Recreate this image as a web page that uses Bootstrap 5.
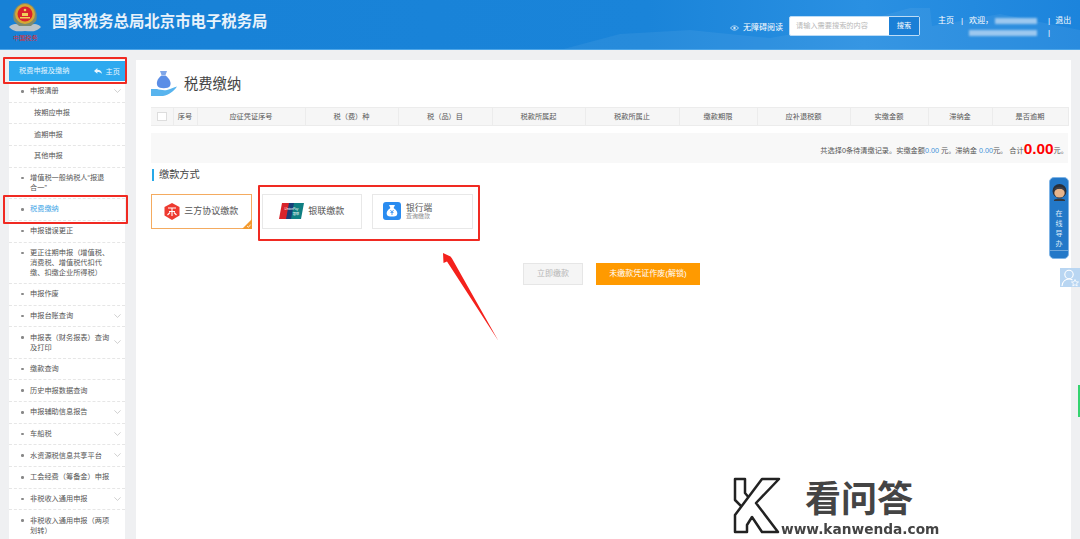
<!DOCTYPE html>
<html lang="zh-CN">
<head>
  <meta charset="UTF-8">
  <title>税费缴纳</title>
  <link href="https://cdn.jsdelivr.net/npm/bootstrap@5.3.0/dist/css/bootstrap.min.css" rel="stylesheet">
  <style>
    html, body { height: 100%; }
    body {
      width: 1080px; height: 539px; overflow: hidden; position: relative;
      background: #eff0f2; color: #555;
      font-family: "Liberation Sans", "Noto Sans CJK SC", sans-serif; font-size: 7.2px;
    }
    .top-bar {
      height: 50px; color: #fff; position: relative; overflow: hidden;
      background: linear-gradient(90deg, #1781d6 0%, #1a84d9 60%, #2a90e2 80%, #1c84dc 100%);
      border-bottom: 1px solid #4ea6e8;
    }
    .top-hills { position: absolute; left: 560px; top: 0; }
    .emblem { position: absolute; left: 8px; top: 1px; }
    .emblem-note { position: absolute; left: 13px; top: 34px; color: #d5303a; font-size: 6.2px; line-height: 8px; }
    .site-title { position: absolute; left: 52px; top: 12px; font-size: 15.4px; line-height: 20px; font-weight: 700; color: #e8f2fb; }
    .top-tools { position: absolute; left: 730px; top: 15px; width: 350px; }
    .read-link { width: 59px; font-size: 8px; line-height: 22px; margin-top: 1px; }
    .search-box { width: 131px; height: 20px; border: 1px solid #bcdcf6; border-radius: 2px; background: #fff; margin-top: 1px; }
    .search-hint { width: 99px; padding-left: 6px; color: #b8b8b8; line-height: 18px; }
    .search-btn { flex: 1; background: #1a7fd6; color: #fff; text-align: center; line-height: 18px; }
    .top-links { margin: 0 0 0 18px; font-size: 8px; line-height: 12px; width: 134px; }
    .top-sep { margin-left: 7px; }
    .top-hello { margin-left: 6px; width: 26px; }
    .top-name { width: 42px; }
    .blur-name { display: block; background: #9cc8ef; filter: blur(1px); height: 6px; margin-top: 3px; }
    .blur-one { width: 42px; }
    .blur-two { width: 68px; margin: 6px 0 0 -26px; }
    .top-sep2 { margin-left: 11px; }
    .top-out { margin-left: 5px; }
    .page-row { height: 489px; padding: 10px 0 0 9px; gap: 11px; }

    .side-menu { width: 116px; background: #fff; flex: none; padding-top: 1px; }
    .side-head { background: #2ea9ef; color: #e9f6fe; height: 20px; padding: 0 5px 0 10px; line-height: 19px; }
    .side-item {
      border: 0; border-bottom: 1px dashed #e6e6e6; border-radius: 0 !important; background: transparent;
      min-height: 21.7px; padding: 5.3px 14px 5.1px 21px; line-height: 10px; font-size: 7.2px; color: #555; position: relative;
    }
    .side-item::before { content: ""; position: absolute; left: 12px; top: 9px; width: 2.5px; height: 2.5px; border-radius: 50%; background: #888; }
    .side-sub { padding-left: 25px; }
    .side-sub::before { display: none; }
    .side-on { color: #3aa3e6; }
    .side-arrow { position: absolute; right: 4px; top: 8px; }
    .side-tall .side-arrow { top: 13px; }

    .main-panel { width: 935px; background: #fff; flex: none; padding: 10px 3px 0 15px; }
    .page-title { height: 37px; gap: 6px; font-size: 14.3px; color: #444; line-height: 28px; margin-left: -1px; }
    .pay-table { width: 917px; table-layout: fixed; margin: 0; }
    .pay-table th {
      background: #f6f6f6; height: 18px; padding: 0; border: 1px solid #ececec; border-width: 1px 1px 1px 0;
      text-align: center; font-weight: 400; font-size: 7.2px; line-height: 16px; color: #555;
    }
    .pay-check { display: inline-block; width: 10px; height: 9px; background: #fff; border: 1px solid #ddd; vertical-align: middle; margin-top: -1px; }
    .sum-strip { width: 917px; height: 30px; background: #f8f8f8; margin-top: 7px; padding: 9px 0 0 0; text-align: right; line-height: 16px; }
    .sum-blue { color: #3f93d8; }
    .sum-big { color: #f00; font-weight: 700; font-size: 15.4px; line-height: 14px; vertical-align: -1px; }
    .way-title { border-left: 2px solid #27a9e8; margin: 6px 0 0 1px; padding-left: 5px; height: 12px; line-height: 12px; font-size: 10.2px; color: #444; }
    .way-row { margin-top: 12.500px; gap: 10px; }
    .way-card { width: 100.500px; height: 35.500px; border: 1px solid #e8e8e8; gap: 4px; font-size: 9px; color: #555; position: relative; background: #fff; }
    .way-on { border-color: #f4ab60; }
    .way-bank { justify-content: flex-start !important; padding-left: 10px; gap: 5px; }
    .way-corner { position: absolute; right: -1px; bottom: -1px; }
    .way-lines { line-height: 10px; font-size: 8.7px; }
    .way-lines small { display: block; font-size: 6px; line-height: 7px; color: #888; }
    .act-row { margin: 33.500px 0 0 372px; gap: 13px; }
    .act-gray, .act-orange { height: 22px; padding: 0; font-size: 8px; line-height: 20px; border-radius: 0; }
    .act-gray { width: 60px; background: #f5f5f5; border: 1px solid #e6e6e6; color: #b5b5b5; }
    .act-orange { width: 104px; background: #ff9a00; border: 1px solid #ff9a00; color: #fff; }

    .red-box { position: absolute; border: 2px solid #f02a22; border-radius: 1px; }
    .red-a { left: 3px; top: 57px; width: 124px; height: 27px; }
    .red-b { left: 3px; top: 195px; width: 125px; height: 29px; }
    .red-c { left: 258px; top: 185px; width: 222px; height: 56px; }
    .red-arrow { position: absolute; left: 435px; top: 245px; }
    .help-tab { position: absolute; left: 1049px; top: 177px; width: 20px; height: 82px; border-radius: 5px; background: #2378c8; color: #dbeaf8; text-align: center; padding-top: 5px; font-size: 7px; line-height: 10px; border: 1px solid #7fb4e6; }
    .help-tab svg { display: block; margin: 0 auto; }
    .help-tab span { display: block; margin-top: 8px; padding-bottom: 1px; border-bottom: 1px solid rgba(255,255,255,.35); }
    .user-tab { position: absolute; left: 1060px; top: 268px; width: 20px; height: 19px; background: #b9d6f2; }
    .green-tab { position: absolute; left: 1078px; top: 385px; width: 2px; height: 32px; background: #35d36f; }
    .mark-logo { position: absolute; left: 732px; top: 475px; }
    .mark-name { position: absolute; left: 805px; top: 480px; font-size: 36px; line-height: 40px; font-weight: 700; color: #444; }
    .mark-url { position: absolute; left: 781px; top: 521px; font-size: 14px; line-height: 16px; font-weight: 700; color: #444; font-family: "DejaVu Sans", sans-serif; transform-origin: left center; transform: scaleX(.98); }
  </style>
</head>
<body>

<header class="top-bar">
  <svg class="top-hills" width="520" height="50" viewBox="0 0 520 50"><path d="M0 50 L60 34 L130 30 L210 38 L300 22 L350 8 L370 8 L372 26 L440 14 L520 30 V50 Z" fill="#fff" opacity=".06"/></svg>
  <svg class="emblem" width="34" height="34" viewBox="0 0 34 34">
    <path d="M1 26 C7 20 11 25 17 25 C23 25 27 20 33 26 C27 32 22 30 17 30 C12 30 7 32 1 26Z" fill="#b9c3c9"/>
    <path d="M6 20 C3 10 10 2 17 2 C24 2 31 10 28 20 L23 25 H11Z" fill="#7d8a70"/>
    <circle cx="17" cy="13" r="10" fill="#d7a733"/>
    <circle cx="17" cy="13" r="7.500" fill="#d9232e"/>
    <path d="M12 16 h10 v1.500 h-10z M14 12 h6 v3 h-6z" fill="#f1cf5a"/>
    <circle cx="17" cy="9" r="1.300" fill="#f1cf5a"/>
  </svg>
  <div class="emblem-note">中国税务</div>
  <div class="site-title">国家税务总局北京市电子税务局</div>
  <div class="top-tools d-flex">
    <div class="read-link d-flex align-items-center gap-1">
      <svg width="9" height="6" viewBox="0 0 9 6"><path d="M.5 3 C2.5 .2 6.5 .2 8.5 3 C6.5 5.8 2.5 5.8 .5 3Z" fill="none" stroke="#d5e9f9" stroke-width=".8"/><circle cx="4.500" cy="3" r="1.200" fill="#d5e9f9"/></svg>
      <span class="text-nowrap">无障碍阅读</span>
    </div>
    <div class="search-box d-flex">
      <div class="search-hint text-nowrap">请输入需要搜索的内容</div>
      <div class="search-btn">搜索</div>
    </div>
    <div class="top-links d-flex text-nowrap">
      <span>主页</span>
      <span class="top-sep">|</span>
      <span class="top-hello">欢迎，</span>
      <div class="top-name">
        <span class="blur-name blur-one"></span>
        <span class="blur-name blur-two"></span>
      </div>
      <span class="top-sep2">|<br>|</span>
      <span class="top-out">退出</span>
    </div>
  </div>
</header>

<div class="page-row d-flex">
  <aside class="side-menu">
    <div class="side-head d-flex justify-content-between">
      <span>税费申报及缴纳</span>
      <span class="d-flex align-items-center gap-1">
        <svg width="8" height="6" viewBox="0 0 8 6"><path d="M0 3 L3.4 0 V1.7 C6 1.7 7.6 3 8 6 C6.8 4.4 5.4 4 3.4 4 V5.8Z" fill="#e9f6fe"/></svg>
        主页
      </span>
    </div>
    <div class="list-group list-group-flush">
      <div class="list-group-item side-item">申报清册<svg class="side-arrow" width="7" height="4" viewBox="0 0 7 4"><path d="M.4.4 L3.5 3.4 L6.6.4" fill="none" stroke="#bbb" stroke-width=".7"/></svg></div>
      <div class="list-group-item side-item side-sub">按期应申报</div>
      <div class="list-group-item side-item side-sub">逾期申报</div>
      <div class="list-group-item side-item side-sub">其他申报</div>
      <div class="list-group-item side-item">增值税一般纳税人“报退合一”</div>
      <div class="list-group-item side-item side-on">税费缴纳</div>
      <div class="list-group-item side-item">申报错误更正</div>
      <div class="list-group-item side-item">更正往期申报（增值税、消费税、增值税代扣代缴、扣缴企业所得税）</div>
      <div class="list-group-item side-item">申报作废</div>
      <div class="list-group-item side-item">申报台账查询<svg class="side-arrow" width="7" height="4" viewBox="0 0 7 4"><path d="M.4.4 L3.5 3.4 L6.6.4" fill="none" stroke="#bbb" stroke-width=".7"/></svg></div>
      <div class="list-group-item side-item side-tall">申报表（财务报表）查询及打印<svg class="side-arrow" width="7" height="4" viewBox="0 0 7 4"><path d="M.4.4 L3.5 3.4 L6.6.4" fill="none" stroke="#bbb" stroke-width=".7"/></svg></div>
      <div class="list-group-item side-item">缴款查询</div>
      <div class="list-group-item side-item">历史申报数据查询</div>
      <div class="list-group-item side-item">申报辅助信息报告<svg class="side-arrow" width="7" height="4" viewBox="0 0 7 4"><path d="M.4.4 L3.5 3.4 L6.6.4" fill="none" stroke="#bbb" stroke-width=".7"/></svg></div>
      <div class="list-group-item side-item">车船税<svg class="side-arrow" width="7" height="4" viewBox="0 0 7 4"><path d="M.4.4 L3.5 3.4 L6.6.4" fill="none" stroke="#bbb" stroke-width=".7"/></svg></div>
      <div class="list-group-item side-item">水资源税信息共享平台<svg class="side-arrow" width="7" height="4" viewBox="0 0 7 4"><path d="M.4.4 L3.5 3.4 L6.6.4" fill="none" stroke="#bbb" stroke-width=".7"/></svg></div>
      <div class="list-group-item side-item">工会经费（筹备金）申报</div>
      <div class="list-group-item side-item">非税收入通用申报<svg class="side-arrow" width="7" height="4" viewBox="0 0 7 4"><path d="M.4.4 L3.5 3.4 L6.6.4" fill="none" stroke="#bbb" stroke-width=".7"/></svg></div>
      <div class="list-group-item side-item">非税收入通用申报（两项划转）</div>
    </div>
  </aside>

  <main class="main-panel">
    <div class="page-title d-flex">
      <svg width="28" height="28" viewBox="0 0 28 28">
        <path d="M10 1 L17 1 L15.5 5 H11.5Z" fill="#7fa6e8"/>
        <path d="M11.5 5.5 H15.5 C20 9 21.5 13 20 16 C18.5 19 9 19 7.5 16 C6 13 7 9 11.5 5.5Z" fill="#5b8ee6"/>
        <path d="M1 19 H7 C10 20 14 20.5 17 20 C20 19.5 24 17 27 16.5 C24 21 19 25 13 26 H1Z" fill="#58b4ee"/>
      </svg>
      <span>税费缴纳</span>
    </div>

    <table class="table pay-table">
      <colgroup>
        <col width="22"><col width="24"><col width="108"><col width="93"><col width="94"><col width="93"><col width="94"><col width="78"><col width="93"><col width="78"><col width="64"><col width="76">
      </colgroup>
      <thead>
        <tr>
          <th><span class="pay-check"></span></th><th>序号</th><th>应征凭证序号</th><th>税（费）种</th><th>税（品）目</th><th>税款所属起</th><th>税款所属止</th><th>缴款期限</th><th>应补退税额</th><th>实缴金额</th><th>滞纳金</th><th>是否逾期</th>
        </tr>
      </thead>
    </table>

    <div class="sum-strip">共选择0条待清缴记录。实缴金额<span class="sum-blue">0.00</span> 元。滞纳金 <span class="sum-blue">0.00</span>元。 合计<span class="sum-big">0.00</span>元。</div>

    <div class="way-title">缴款方式</div>

    <div class="way-row d-flex">
      <div class="way-card way-on d-flex align-items-center justify-content-center">
        <svg width="16" height="17" viewBox="0 0 16 17">
          <path d="M8 0 L15.5 4 V12.5 L8 17 L.5 12.5 V4Z" fill="#ee3a30"/>
          <path d="M4 5 H12 M8 5 V13 M5 8.5 H11 M3.5 12 L6 9.5 M12.5 12 L10 9.5" stroke="#fff" stroke-width="1.1" fill="none"/>
        </svg>
        <span>三方协议缴款</span>
        <svg class="way-corner" width="10" height="10" viewBox="0 0 10 10"><path d="M10 0 V10 H0Z" fill="#f39a2e"/><path d="M5 7 L6.5 8.3 L8.6 5.6" stroke="#fff" stroke-width=".8" fill="none"/></svg>
      </div>
      <div class="way-card d-flex align-items-center justify-content-center">
        <svg width="25" height="16" viewBox="0 0 25 16">
          <path d="M3 0 H12 L9 16 H0Z" fill="#d8232a"/>
          <path d="M10 0 H17 L14 16 H7Z" fill="#173f78"/>
          <path d="M15 0 H25 L22 16 H12Z" fill="#0f7f82"/>
          <text x="12.500" y="7" font-size="3.200" fill="#fff" text-anchor="middle" font-family="Liberation Sans, sans-serif" font-style="italic">UnionPay</text>
          <text x="17" y="11.500" font-size="3.200" fill="#fff" text-anchor="middle" font-family="Noto Sans CJK SC, sans-serif">银联</text>
        </svg>
        <span>银联缴款</span>
      </div>
      <div class="way-card way-bank d-flex align-items-center justify-content-center">
        <svg width="18" height="18" viewBox="0 0 18 18">
          <rect width="18" height="18" rx="3" fill="#2a8cf0"/>
          <path d="M6 3 H12 L10.6 6 C14 8 15 11 14 13 C13 15 5 15 4 13 C3 11 4 8 7.4 6Z" fill="#fff"/>
          <path d="M7.4 8 L9 10 L10.6 8 M7.4 10.4 H10.6 M9 10 V13" stroke="#2a8cf0" stroke-width=".8" fill="none"/>
        </svg>
        <span class="way-lines">银行端<small>查询缴款</small></span>
      </div>
    </div>

    <div class="act-row d-flex">
      <button type="button" class="btn act-gray">立即缴款</button>
      <button type="button" class="btn act-orange">未缴款凭证作废(解锁)</button>
    </div>
  </main>
</div>

<!-- annotations over the screenshot -->
<div class="red-box red-a"></div>
<div class="red-box red-b"></div>
<div class="red-box red-c"></div>
<svg class="red-arrow" width="70" height="100" viewBox="0 0 70 100"><path d="M8 8 L8.500 18 L12 16.500 L63.500 96 L17 13.500 L15.500 11.500Z" fill="#f4211c"/></svg>

<div class="help-tab">
  <svg width="17" height="18" viewBox="0 0 17 18">
    <circle cx="8.500" cy="8" r="7" fill="#2b2f38"/>
    <ellipse cx="8.500" cy="10" rx="5.200" ry="4.500" fill="#e6b48c"/>
    <path d="M3.300 8 C5 5 12 5 13.700 8 V6 C12 3 5 3 3.300 6Z" fill="#3b3f48"/>
    <path d="M3 17 C5 15 12 15 14 17 V18 H3Z" fill="#33383f"/>
  </svg>
  <span>在<br>线<br>导<br>办</span>
</div>
<div class="user-tab">
  <svg width="20" height="19" viewBox="0 0 20 19"><circle cx="9" cy="6.500" r="4.200" fill="none" stroke="#fff" stroke-width="1.100"/><path d="M2 18 C2.500 13 6 11 9 11 C10.500 11 11.500 11.400 12.500 12" fill="none" stroke="#fff" stroke-width="1.100"/><path d="M15 11.500 L16 13.800 L18.500 14 L16.600 15.600 L17.200 18 L15 16.700 L12.800 18 L13.400 15.600 L11.500 14 L14 13.800Z" fill="none" stroke="#fff" stroke-width=".8"/></svg>
</div>
<div class="green-tab"></div>

<svg class="mark-logo" width="50" height="60" viewBox="0 0 50 60">
  <path d="M3 4 H13 V18 L23 30 L15 37 L3 25Z" fill="#fff" stroke="#222" stroke-width="2.500" stroke-linejoin="round"/>
  <path d="M30 4 H47 L24 28 L46 57 H30 L20 42 L15 50 V57 H3 V40Z" fill="#fff" stroke="#222" stroke-width="2.500" stroke-linejoin="round"/>
</svg>
<div class="mark-name">看问答</div>
<div class="mark-url">www.kanwenda.com</div>

<script src="https://cdn.jsdelivr.net/npm/bootstrap@5.3.0/dist/js/bootstrap.bundle.min.js"></script>
</body>
</html>
